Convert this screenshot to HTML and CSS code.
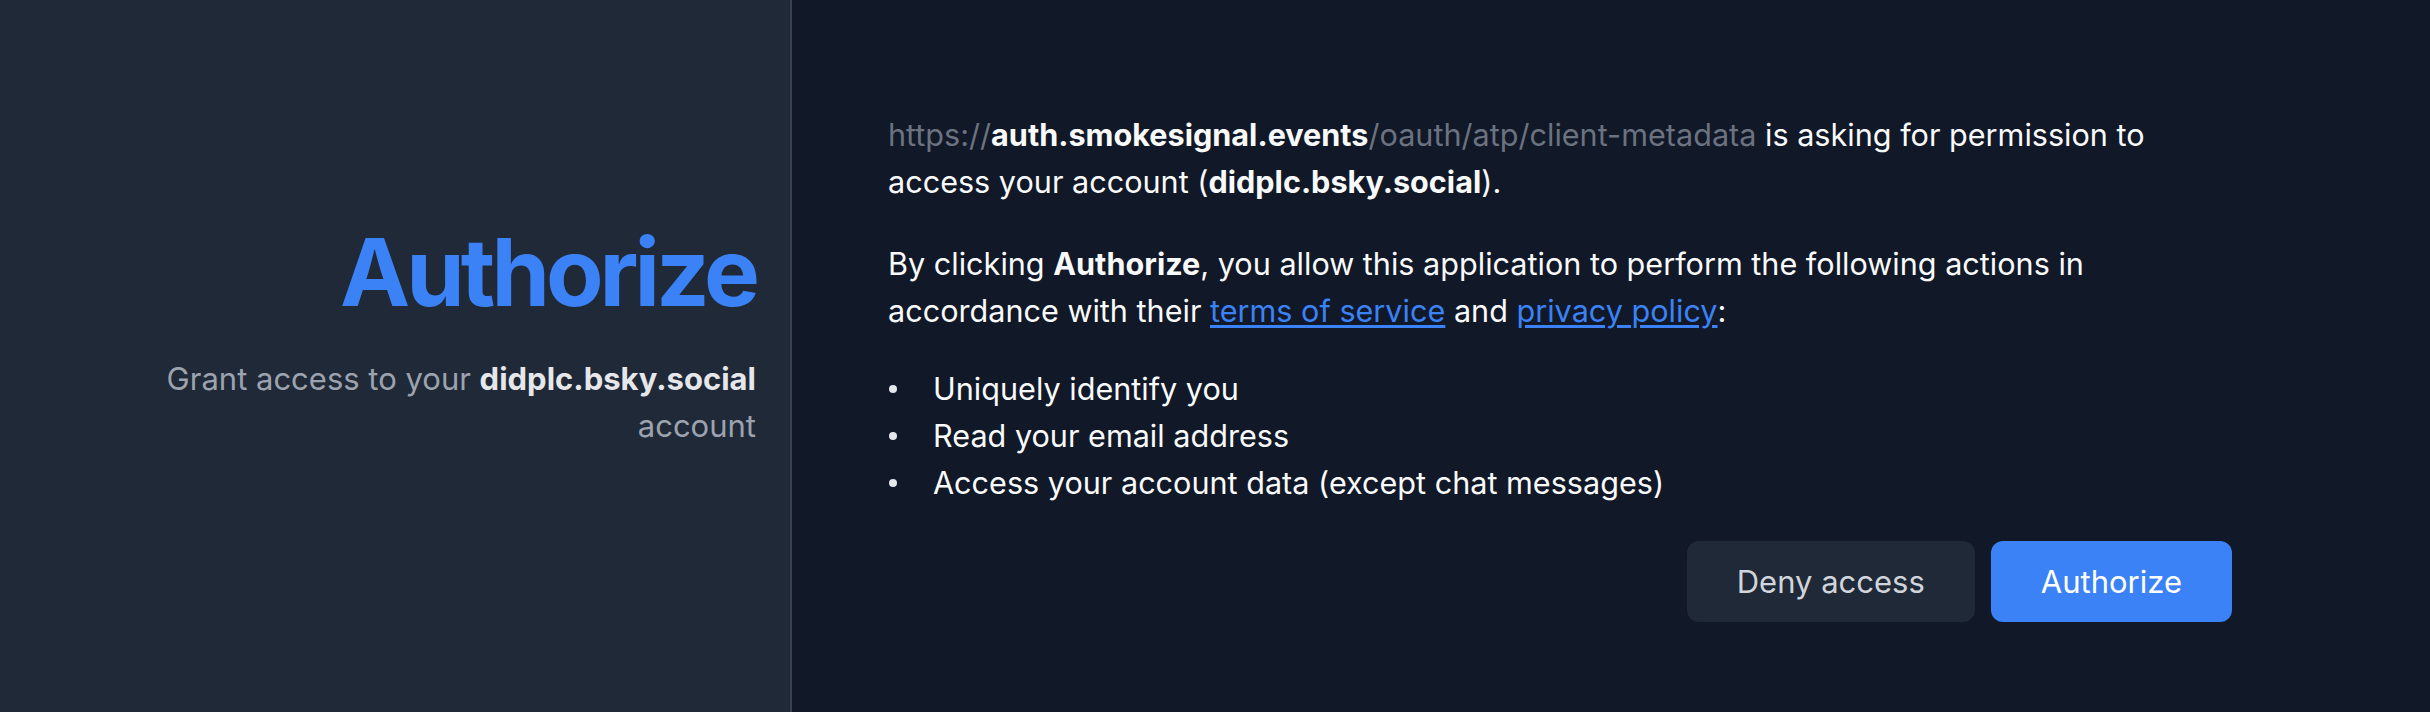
FILE: index.html
```html
<!DOCTYPE html>
<html lang="en">
<head>
    <meta charset="UTF-8">
    <meta name="viewport" content="width=device-width, initial-scale=1.0">
    <title>Authorize</title>
    <link rel="stylesheet" href="styles.css">
</head>
<body>
    <div class="layout">
        <aside class="side">
            <h1 class="side-title">Authorize</h1>
            <p class="side-sub">Grant access to your <b>didplc.bsky.social</b> account</p>
        </aside>
        <main class="main">
            <div class="content">
                <p class="para">
                    <span class="muted">https://</span><b>auth.smokesignal.events</b><span class="muted">/oauth/atp/client-metadata</span>
                    is asking for permission to access your account (<b>didplc.bsky.social</b>).
                </p>
                <p class="para">
                    By clicking <b>Authorize</b>, you allow this application to perform the following actions in
                    accordance with their <a href="#">terms of service</a> and <a href="#">privacy policy</a>:
                </p>
                <ul class="scopes">
                    <li>Uniquely identify you</li>
                    <li>Read your email address</li>
                    <li>Access your account data (except chat messages)</li>
                </ul>
                <div class="actions">
                    <button type="button" class="btn btn-deny">Deny access</button>
                    <button type="button" class="btn btn-accept">Authorize</button>
                </div>
            </div>
        </main>
    </div>
</body>
</html>
```

FILE: styles.css
```css
html, body {
    margin: 0;
    padding: 0;
    height: 100%;
}
body {
    font-family: Inter, "Noto Sans", sans-serif;
    background-color: #111827;
    color: #f9fafb;
}
.layout {
    display: flex;
    height: 712px;
}
.side {
    width: 756px;
    padding: 225px 34px 0 0;
    background-color: #1f2937;
    border-right: 2px solid #374151;
    text-align: right;
}
.side-title {
    margin: 0;
    font-size: 94px;
    line-height: 1;
    font-weight: 700;
    letter-spacing: -4px;
    color: #3b82f6;
}
.side-sub {
    margin: 36px 0 0 0;
    padding-left: 150px;
    font-size: 31px;
    line-height: 47px;
    color: #9ca3af;
}
.side-sub b {
    color: #e5e7eb;
}
.main {
    flex: 1;
    padding: 111px 198px 0 96px;
}
.content {
    font-size: 30.6px;
    line-height: 47px;
}
.para {
    max-width: 1300px;
    margin: 0;
}
.para + .para {
    margin-top: 35px;
}
.muted {
    color: #6b7280;
}
.content a {
    color: #3b82f6;
    text-decoration: underline;
    text-underline-offset: 3px;
}
.scopes {
    list-style: none;
    margin: 31px 0 0 0;
    padding: 0;
}
.scopes li {
    display: flex;
    align-items: center;
    height: 47px;
}
.scopes li::before {
    content: "";
    width: 8px;
    height: 8px;
    margin: 0 36px 0 1px;
    border-radius: 50%;
    background-color: #e5e7eb;
}
.actions {
    display: flex;
    justify-content: flex-end;
    gap: 16px;
    margin-top: 35px;
}
.btn {
    font-family: inherit;
    font-size: 31px;
    line-height: 45px;
    padding: 18px 50px;
    border: none;
    border-radius: 12px;
    cursor: pointer;
}
.btn-deny {
    background-color: #1f2937;
    color: #d1d5db;
}
.btn-accept {
    background-color: #3b82f6;
    color: #fff;
}
```
